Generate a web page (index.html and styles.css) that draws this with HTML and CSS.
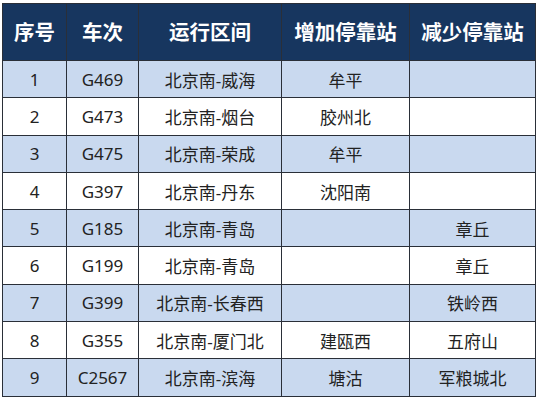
FILE: index.html
```html
<!DOCTYPE html>
<html lang="zh">
<head>
<meta charset="utf-8">
<link rel="stylesheet" href="styles.css">
</head>
<body>
<div class="wrap">
<table class="grid">
  <colgroup>
    <col class="c1"><col class="c2"><col class="c3"><col class="c4"><col class="c5">
  </colgroup>
  <thead>
    <tr><th>序号</th><th>车次</th><th>运行区间</th><th>增加停靠站</th><th>减少停靠站</th></tr>
  </thead>
  <tbody>
    <tr class="alt"><td>1</td><td>G469</td><td>北京南-威海</td><td>牟平</td><td></td></tr>
    <tr><td>2</td><td>G473</td><td>北京南-烟台</td><td>胶州北</td><td></td></tr>
    <tr class="alt"><td>3</td><td>G475</td><td>北京南-荣成</td><td>牟平</td><td></td></tr>
    <tr><td>4</td><td>G397</td><td>北京南-丹东</td><td>沈阳南</td><td></td></tr>
    <tr class="alt"><td>5</td><td>G185</td><td>北京南-青岛</td><td></td><td>章丘</td></tr>
    <tr><td>6</td><td>G199</td><td>北京南-青岛</td><td></td><td>章丘</td></tr>
    <tr class="alt"><td>7</td><td>G399</td><td>北京南-长春西</td><td></td><td>铁岭西</td></tr>
    <tr><td>8</td><td>G355</td><td>北京南-厦门北</td><td>建瓯西</td><td>五府山</td></tr>
    <tr class="alt"><td>9</td><td>C2567</td><td>北京南-滨海</td><td>塘沽</td><td>军粮城北</td></tr>
  </tbody>
</table>
</div>
</body>
</html>
```
FILE: styles.css
```css
html, body {
  margin: 0;
  padding: 0;
  background: #ffffff;
}
.wrap {
  padding: 3px 0 0 2px;
}
.grid {
  border-collapse: collapse;
  table-layout: fixed;
  width: 533px;
  font-family: "Noto Sans", "Noto Sans CJK SC", sans-serif;
  color: #222222;
}
.c1 { width: 64px; }
.c2 { width: 72px; }
.c3 { width: 143px; }
.c4 { width: 128px; }
.c5 { width: 126px; }
.grid th, .grid td {
  border: 1px solid #2a2f38;
  text-align: center;
  vertical-align: middle;
  padding: 0;
  white-space: nowrap;
}
.grid th {
  height: 54px;
  background: #17365f;
  color: #ffffff;
  font-family: "Noto Sans CJK SC", sans-serif;
  font-weight: 700;
  font-size: 20.5px;
  padding-bottom: 2px;
}
.grid td {
  height: 36.3px;
  font-size: 17px;
  background: #ffffff;
}
.grid tr.alt td {
  background: #c9d9ef;
}
```
